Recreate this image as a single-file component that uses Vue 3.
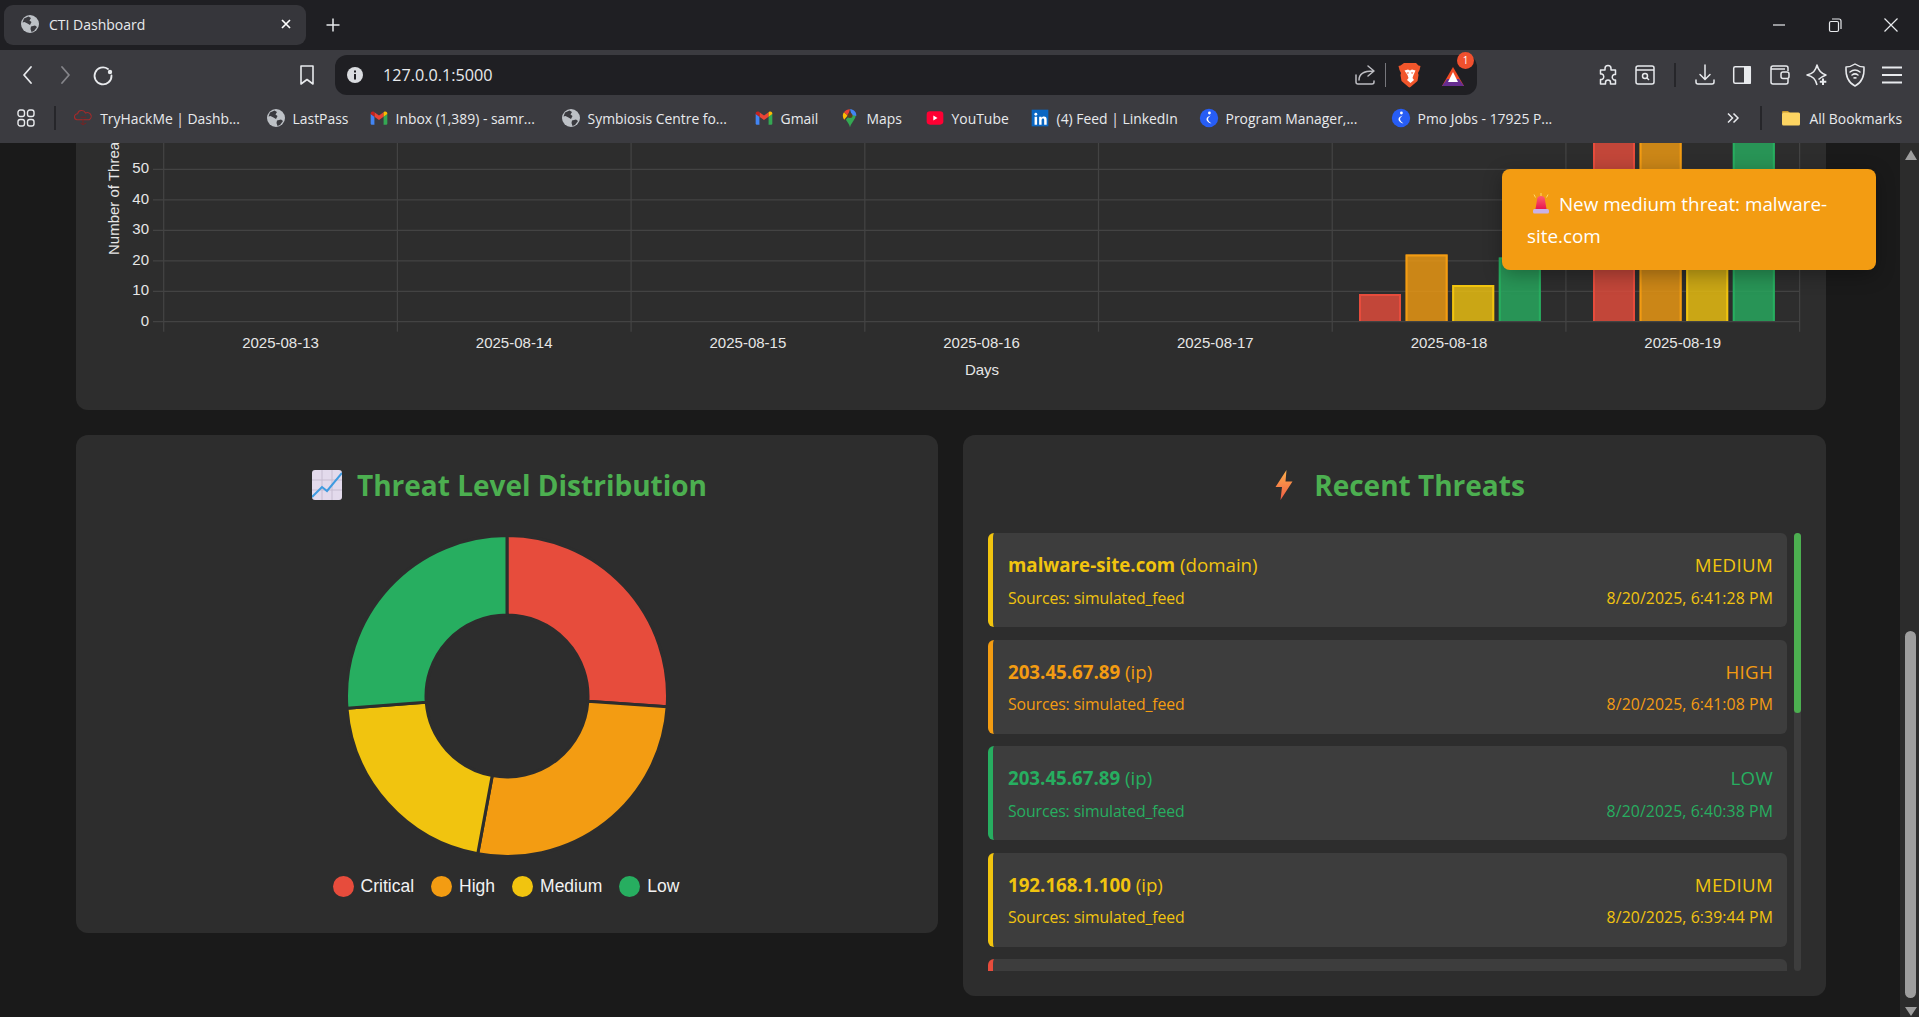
<script setup>
import { computed } from 'vue'

const bookmarks = [
  { icon: 'thm', label: 'TryHackMe | Dashb...', w: 192.4 },
  { icon: 'globe', label: 'LastPass', w: 103 },
  { icon: 'gmail', label: 'Inbox (1,389) - samr...', w: 192 },
  { icon: 'globe', label: 'Symbiosis Centre fo...', w: 193 },
  { icon: 'gmail', label: 'Gmail', w: 86 },
  { icon: 'maps', label: 'Maps', w: 85 },
  { icon: 'youtube', label: 'YouTube', w: 105 },
  { icon: 'linkedin', label: '(4) Feed | LinkedIn', w: 169 },
  { icon: 'naukri', label: 'Program Manager,...', w: 192 },
  { icon: 'naukri', label: 'Pmo Jobs - 17925 P...', w: 168 }
]

const threats = [
  { value: 'malware-site.com', type: 'domain', level: 'medium', time: '8/20/2025, 6:41:28 PM' },
  { value: '203.45.67.89', type: 'ip', level: 'high', time: '8/20/2025, 6:41:08 PM' },
  { value: '203.45.67.89', type: 'ip', level: 'low', time: '8/20/2025, 6:40:38 PM' },
  { value: '192.168.1.100', type: 'ip', level: 'medium', time: '8/20/2025, 6:39:44 PM' }
]

const legend = [
  { label: 'Critical', level: 'critical', color: '#e74c3c', share: 93.8 },
  { label: 'High', level: 'high', color: '#f39c12', share: 96.7 },
  { label: 'Medium', level: 'medium', color: '#f1c40f', share: 75.1 },
  { label: 'Low', level: 'low', color: '#27ae60', share: 94.4 }
]

// bar chart, in page coordinates (the svg viewBox starts at the card's corner)
const gridX = Array.from({ length: 8 }, (_, i) => 163.7 + i * 233.7)
const yTicks = [50, 40, 30, 20, 10, 0].map((v) => ({ v, y: 321.7 - v * 3.045 }))
const days = ['2025-08-13', '2025-08-14', '2025-08-15', '2025-08-16', '2025-08-17', '2025-08-18', '2025-08-19']
const dayLabels = days.map((d, i) => ({ d, x: 280.5 + i * 233.7 }))

const barColors = [
  { fill: 'rgba(231,76,60,.8)', stroke: '#e74c3c' },
  { fill: 'rgba(243,156,18,.8)', stroke: '#f39c12' },
  { fill: 'rgba(241,196,15,.8)', stroke: '#f1c40f' },
  { fill: 'rgba(39,174,96,.8)', stroke: '#27ae60' }
]
const groups = [
  { x: 1359, tops: [294, 254.5, 285, 257.5] },
  { x: 1593, tops: [110, 110, 200, 110] }
]
const bars = groups.flatMap((g) =>
  g.tops.map((top, i) => {
    const x = g.x + i * 46.6
    return {
      x,
      y: top,
      h: 321 - top,
      // border on three sides, the bottom edge sits on the axis
      edge: `M${x + 1} 321V${top + 1}H${x + 41}V321`,
      ...barColors[i]
    }
  })
)

// donut slices
const slices = computed(() => {
  const cx = 160
  const cy = 160
  const R = 160.5
  const r = 81
  const pt = (rad, deg) => {
    const a = ((deg - 90) * Math.PI) / 180
    return `${(cx + rad * Math.cos(a)).toFixed(2)} ${(cy + rad * Math.sin(a)).toFixed(2)}`
  }
  let start = 0
  return legend.map((s) => {
    const end = start + s.share
    const large = s.share > 180 ? 1 : 0
    const d = `M${pt(R, start)}A${R} ${R} 0 ${large} 1 ${pt(R, end)}L${pt(r, end)}A${r} ${r} 0 ${large} 0 ${pt(r, start)}Z`
    start = end
    return { d, color: s.color }
  })
})
</script>

<template>
  <div class="window">
    <!-- shared icons -->
    <svg class="sprite" width="0" height="0">
      <symbol id="globe" viewBox="0 0 20 20">
        <circle cx="10" cy="10" r="9" fill="#bdc1c6" />
        <path d="M4 4.500 8.500 2.500 11 4 9.500 6.500 11.500 8 10 11 7.500 9.500 4.500 8 2.500 8.500zM11 12.500 15 11.500 17 13 14 17 11.500 18 10.500 15z" fill="#3a3a3f" />
      </symbol>
      <symbol id="gmail" viewBox="0 0 24 24">
        <path d="M2 7v12a1 1 0 0 0 1 1h3.500V10.500z" fill="#4285f4" />
        <path d="M17.500 10.500V20H21a1 1 0 0 0 1-1V7z" fill="#34a853" />
        <path d="M6.500 10.500 12 14.500 17.500 10.500V5L12 9 6.500 5z" fill="#ea4335" />
        <path d="M17.500 5v5.500L22 7.200V6.500C22 4.500 19.700 3.400 18.200 4.500z" fill="#fbbc04" />
        <path d="M2 7.200 6.500 10.500V5L5.800 4.500C4.300 3.400 2 4.500 2 6.500z" fill="#c5221f" />
      </symbol>
      <symbol id="maps" viewBox="0 0 24 24">
        <path d="M12 23c-1-4-3-6-5-9l6-7 5.800 2c.2 4-4.800 8-6.800 14z" fill="#34a853" />
        <path d="M5 14c-1-1.500-1.600-3-1.600-5 0-1.500.5-3 1.400-4l4.500 4z" fill="#fbbc04" />
        <path d="M4.800 5C6.300 2.800 9 1.500 12 1.500l-2.500 7.500z" fill="#ea4335" />
        <path d="M12 1.500c4 0 8 3 7.500 8L14 8.500l-2-7z" fill="#4285f4" />
        <circle cx="12" cy="9" r="3" fill="#5a3d1e" />
      </symbol>
      <symbol id="youtube" viewBox="0 0 24 24">
        <rect x="2" y="4" width="20" height="16" rx="4" fill="#ff0033" />
        <path d="M10 9v6l5-3z" fill="#fff" />
      </symbol>
      <symbol id="linkedin" viewBox="0 0 24 24">
        <rect x="2" y="2" width="20" height="20" fill="#0a66c2" />
        <circle cx="7" cy="7.500" r="1.700" fill="#fff" />
        <path d="M5.500 10.500h3V20h-3zM11 10.500h2.800v1.300c.7-1.100 1.800-1.600 3-1.600 2.200 0 3.200 1.400 3.200 3.900V20h-3v-5.500c0-1.100-.4-1.800-1.400-1.800s-1.700.7-1.700 1.900V20H11z" fill="#fff" />
      </symbol>
      <symbol id="naukri" viewBox="0 0 24 24">
        <circle cx="12" cy="12" r="11" fill="#275df5" />
        <circle cx="12.500" cy="6" r="1.700" fill="#fff" />
        <path d="M14 9c-2.500 2-3.500 3.500-3 5 .5 1.500 2 3 4 4.500-3-.5-6-2.500-6-5 0-2 2-3.700 5-4.500z" fill="#fff" />
      </symbol>
      <symbol id="thm" viewBox="0 0 24 24">
        <path d="M5 14a3.500 3.500 0 0 1 .5-7 5 5 0 0 1 9.500-1 4 4 0 0 1 4.500 8z" fill="none" stroke="#a52a2a" stroke-width="1.300" />
        <path d="M9 11h7M12 14v6M9 18l3 2 4-2" fill="none" stroke="#7a2222" stroke-width="1.200" />
      </symbol>
    </svg>

    <!-- tab strip -->
    <div class="tabstrip">
      <div class="tab">
        <svg class="fav"><use href="#globe" /></svg>
        <span class="tab-title">CTI Dashboard</span>
        <svg class="tab-x" width="12" height="12" viewBox="0 0 12 12">
          <path d="M2 2l8 8M10 2l-8 8" stroke="#fff" stroke-width="1.700" />
        </svg>
      </div>
      <svg class="tab-plus" width="16" height="16" viewBox="0 0 16 16">
        <path d="M8 1.500v13M1.500 8h13" stroke="#e8eaed" stroke-width="1.500" />
      </svg>
      <div class="win-controls">
        <svg width="16" height="16" viewBox="0 0 16 16"><path d="M2 8h12" stroke="#e8eaed" stroke-width="1.200" /></svg>
        <svg width="16" height="16" viewBox="0 0 16 16" fill="none" stroke="#e8eaed" stroke-width="1.200">
          <rect x="2.500" y="4.500" width="9" height="10" rx="1.500" />
          <path d="M5 2h7a2 2 0 0 1 2 2v8" />
        </svg>
        <svg width="16" height="16" viewBox="0 0 16 16"><path d="M1.500 1.500l13 13M14.500 1.500l-13 13" stroke="#e8eaed" stroke-width="1.200" /></svg>
      </div>
    </div>

    <!-- toolbar -->
    <div class="toolbar">
      <div class="btn">
        <svg width="22" height="22" viewBox="0 0 22 22" fill="none" stroke="#e8eaed" stroke-width="1.800" stroke-linecap="round" stroke-linejoin="round"><path d="M14 3 7 11l7 8" /></svg>
      </div>
      <div class="btn">
        <svg width="22" height="22" viewBox="0 0 22 22" fill="none" stroke="#85858a" stroke-width="1.800" stroke-linecap="round" stroke-linejoin="round"><path d="M8 3l7 8-7 8" /></svg>
      </div>
      <div class="btn">
        <svg width="22" height="22" viewBox="0 0 22 22" fill="none" stroke="#e8eaed" stroke-width="1.800" stroke-linecap="round"><path d="M16 5A8.500 8.500 0 1 0 19.500 11.500" /><circle cx="18" cy="8" r="2.200" fill="#e8eaed" stroke="none" /></svg>
      </div>
      <div class="btn bookmark-btn">
        <svg width="20" height="24" viewBox="0 0 20 24" fill="none" stroke="#e8eaed" stroke-width="1.600" stroke-linejoin="round"><path d="M4 3h12v18l-6-4.500L4 21z" /></svg>
      </div>
      <div class="pill">
        <svg width="20" height="20" viewBox="0 0 20 20">
          <circle cx="10" cy="10" r="8" fill="#dadce0" />
          <rect x="9" y="9" width="2" height="5.500" fill="#1f1f23" />
          <rect x="9" y="5.500" width="2" height="2" fill="#1f1f23" />
        </svg>
        <span class="url">127.0.0.1:5000</span>
        <div class="pill-right">
          <svg width="24" height="24" viewBox="0 0 24 24" fill="none" stroke="#bdbdc2" stroke-width="1.500" stroke-linecap="round" stroke-linejoin="round">
            <path d="M3 12v7a2 2 0 0 0 2 2h14a2 2 0 0 0 2-2v-1" />
            <path d="M6 17c0-6 4-9 14-9M15 3l6 5-6 5" />
          </svg>
          <span class="pill-sep"></span>
          <svg class="lion" width="24" height="28" viewBox="0 0 24 28">
            <path d="M6 2h12l2.500 2.500 2 .5-1 4-1.500 3 .5 2-1 6-7 6-1 .5-1-.5-7-6-1-6 .5-2-1.500-3-1-4 2-.5z" fill="#f1562b" />
            <path d="M6.500 9.500 10 8.500l2 1 2-1 3.500 1-2 4.500-1 3 1.500 2-3.500 3-3.500-3 1.500-2-1-3z" fill="#fff" />
            <path d="M8.500 11.500h2.500l-1 1.500zM15.500 11.500H13l1 1.500z" fill="#f1562b" />
          </svg>
          <span class="bat">
            <svg width="26" height="26" viewBox="0 0 26 26">
              <path d="M2 24 13 5 24 24z" fill="#ef4a25" />
              <path d="M2 24 7 17h12l5 7z" fill="#662d91" />
              <path d="M8 20 13 10l5 10z" fill="#fff" />
            </svg>
            <span class="badge">1</span>
          </span>
        </div>
      </div>
      <div class="ext">
        <div class="btn">
          <svg width="24" height="24" viewBox="0 0 24 24" fill="none" stroke="#e8eaed" stroke-width="1.500" stroke-linejoin="round">
            <path d="M9 5.500a3 3 0 0 1 6 0V7h4.500v4.500H18a3 3 0 0 0 0 5.500h1.500V21H14.500v-1.500a2.500 2.500 0 0 0-5 0V21H4.500v-4.500H6a3 3 0 0 0 0-5.500H4.500V7H9z" />
          </svg>
        </div>
        <div class="btn">
          <svg width="24" height="24" viewBox="0 0 24 24" fill="none" stroke="#e8eaed" stroke-width="1.500">
            <rect x="3" y="3" width="18" height="18" rx="2" />
            <path d="M3 7h18" />
            <circle cx="12" cy="13" r="2.500" />
            <path d="M14 15l2 2" />
          </svg>
        </div>
        <span class="ext-sep"></span>
        <div class="btn">
          <svg width="24" height="24" viewBox="0 0 24 24" fill="none" stroke="#e8eaed" stroke-width="1.500" stroke-linecap="round" stroke-linejoin="round">
            <path d="M12 2v14M7 11.500l5 5 5-5M3 17v2a2 2 0 0 0 2 2h14a2 2 0 0 0 2-2v-2" />
          </svg>
        </div>
        <div class="btn">
          <svg width="24" height="24" viewBox="0 0 24 24">
            <rect x="3.700" y="3.700" width="16.600" height="16.600" rx="1.500" fill="none" stroke="#e8eaed" stroke-width="1.500" />
            <rect x="14" y="3" width="7" height="18" rx="1" fill="#e8eaed" />
          </svg>
        </div>
        <div class="btn">
          <svg width="24" height="24" viewBox="0 0 24 24" fill="none" stroke="#e8eaed" stroke-width="1.500" stroke-linejoin="round">
            <path d="M20 8V5a2 2 0 0 0-2-2H5a2 2 0 0 0-2 2v14a2 2 0 0 0 2 2h13a2 2 0 0 0 2-2v-3" />
            <path d="M3 6h14" />
            <rect x="13" y="9" width="8" height="6.500" rx="2" />
          </svg>
        </div>
        <div class="btn">
          <svg width="24" height="24" viewBox="0 0 24 24" fill="none" stroke="#e8eaed" stroke-width="1.500" stroke-linejoin="round">
            <path d="M13.500 16.500C15 15 16 14 21 12c-5-1.500-7.500-4-9-10-1.500 6-4 8.500-10 10 6 1.500 8.500 4 10 10" />
            <path d="M18 15.500v6.500M14.800 18.800h6.500" stroke-width="2" />
          </svg>
        </div>
        <div class="btn">
          <svg width="24" height="26" viewBox="0 0 24 26" fill="none" stroke="#e8eaed" stroke-width="1.500" stroke-linecap="round" stroke-linejoin="round">
            <path d="M12 2c3 2 6 3 9 3 .5 8-1 15-9 19C4 20 2.500 13 3 5c3 0 6-1 9-3z" />
            <path d="M7 10c3-2.500 7-2.500 10 0M9 13c2-1.500 4-1.500 6 0M11 16c.7-.4 1.300-.4 2 0" />
          </svg>
        </div>
        <div class="btn">
          <svg width="24" height="24" viewBox="0 0 24 24" stroke="#e8eaed" stroke-width="1.800"><path d="M2 4.500h20M2 12h20M2 19.500h20" /></svg>
        </div>
      </div>
    </div>

    <!-- bookmarks bar -->
    <div class="bookmarks">
      <svg class="apps" width="18" height="18" viewBox="0 0 18 18" fill="none" stroke="#e8eaed" stroke-width="1.400">
        <rect x="1" y="1" width="6.500" height="6.500" rx="2.200" />
        <rect x="10.500" y="1" width="6.500" height="6.500" rx="2.200" />
        <rect x="1" y="10.500" width="6.500" height="6.500" rx="2.200" />
        <rect x="10.500" y="10.500" width="6.500" height="6.500" rx="2.200" />
      </svg>
      <span class="bm-sep first"></span>
      <div
        v-for="b in bookmarks"
        :key="b.label"
        class="bm"
        :style="{ width: b.w + 'px' }"
      >
        <svg class="bm-icon"><use :href="'#' + b.icon" /></svg>
        <span>{{ b.label }}</span>
      </div>
      <div class="bm-end">
        <svg width="14" height="14" viewBox="0 0 14 14" fill="none" stroke="#e8eaed" stroke-width="1.500"><path d="M2 2.500 6.500 7 2 11.500M7.500 2.500 12 7l-4.500 4.500" /></svg>
        <span class="bm-sep"></span>
        <svg class="folder" width="20" height="20" viewBox="0 0 20 20">
          <path d="M1 4a1 1 0 0 1 1-1h5l2 2h-8z" fill="#c99a2e" />
          <rect x="1" y="4.500" width="18" height="13" rx="1.500" fill="#fcd462" />
        </svg>
        <span class="all">All Bookmarks</span>
      </div>
    </div>

    <!-- page -->
    <div class="viewport">
      <main class="page">
        <section class="card chart-card">
          <svg class="bar-chart" width="1750" height="267" viewBox="76 143 1750 267">
            <g stroke="#434343" stroke-width="1.250">
              <line v-for="x in gridX" :key="x" :x1="x" :x2="x" y1="142" y2="331.700" />
              <line v-for="t in yTicks" :key="t.v" x1="153" x2="1800" :y1="t.y" :y2="t.y" />
            </g>
            <g v-for="(b, i) in bars" :key="i">
              <rect :x="b.x" :y="b.y" width="42" :height="b.h" :fill="b.fill" />
              <path :d="b.edge" fill="none" :stroke="b.stroke" stroke-width="2" />
            </g>
            <text v-for="t in yTicks" :key="'l' + t.v" class="tick" x="149" :y="t.y + 4" text-anchor="end">{{ t.v }}</text>
            <text v-for="l in dayLabels" :key="l.d" class="tick" :x="l.x" y="348" text-anchor="middle">{{ l.d }}</text>
            <text class="tick" x="982" y="375" text-anchor="middle">Days</text>
            <text class="tick" transform="translate(119 255) rotate(-90)">Number of Threats</text>
          </svg>
        </section>

        <div class="columns">
          <section class="card">
            <h2 class="card-title">
              <svg class="emoji" width="30" height="30" viewBox="0 0 30 30">
                <rect width="30" height="30" rx="3" fill="#e3daec" />
                <path d="M0 10h30M0 20h30M10 0v30M20 0v30" stroke="#c6bcd0" stroke-width="1" />
                <path d="M0 27 10 17l5 4L30 3" fill="none" stroke="#3f9be0" stroke-width="2" />
              </svg>
              <span>Threat Level Distribution</span>
            </h2>
            <div class="donut">
              <svg width="320" height="320" viewBox="0 0 320 320">
                <path
                  v-for="s in slices"
                  :key="s.color"
                  :d="s.d"
                  :fill="s.color"
                  stroke="#2d2d2d"
                  stroke-width="3"
                />
              </svg>
            </div>
            <div class="legend">
              <div v-for="l in legend" :key="l.label" class="legend-item">
                <span class="dot" :class="l.level"></span>
                <span>{{ l.label }}</span>
              </div>
            </div>
          </section>

          <section class="card">
            <h2 class="card-title">
              <svg class="emoji" width="30" height="30" viewBox="0 0 30 30">
                <defs>
                  <linearGradient id="bolt" x1="0" y1="0" x2="0" y2="1">
                    <stop offset="0" stop-color="#fdb04a" />
                    <stop offset="1" stop-color="#ef5b45" />
                  </linearGradient>
                </defs>
                <path d="M17.500 0 6.500 17h6.500l-1.500 13 12-18.500h-7z" fill="url(#bolt)" />
              </svg>
              <span>Recent Threats</span>
            </h2>
            <div class="threat-wrap">
              <div class="threat-list">
                <article v-for="t in threats" :key="t.time" class="threat" :class="t.level">
                  <div class="row main-row">
                    <span><strong>{{ t.value }}</strong> ({{ t.type }})</span>
                    <span class="level">{{ t.level.toUpperCase() }}</span>
                  </div>
                  <div class="row sub-row">
                    <span class="sources">Sources: simulated_feed</span>
                    <span class="time">{{ t.time }}</span>
                  </div>
                </article>
                <article class="threat critical"></article>
              </div>
              <div class="list-track"><div class="list-thumb"></div></div>
            </div>
          </section>
        </div>
      </main>
      <div class="page-scroll">
        <span class="arrow up"></span>
        <span class="page-thumb"></span>
        <span class="arrow down"></span>
      </div>
    </div>

    <!-- toast -->
    <div class="toast">
      <svg class="siren" width="20" height="21" viewBox="0 0 20 21">
        <defs>
          <linearGradient id="dome" x1="0" y1="0" x2="0" y2="1">
            <stop offset="0" stop-color="#ff5f6d" />
            <stop offset="1" stop-color="#e8174f" />
          </linearGradient>
        </defs>
        <path d="M10 0v3M3 1.500l1.500 3M17 1.500l-1.500 3" stroke="#ffd76a" stroke-width="1" />
        <path d="M4.500 16 6 7a4 4 0 0 1 8 0l1.500 9z" fill="url(#dome)" />
        <rect x="2" y="16" width="16" height="4.500" rx="1.500" fill="#c9b2e8" />
      </svg>
      New medium threat: malware-site.com
    </div>
  </div>
</template>

<style scoped>
.window {
  position: relative;
  height: 100vh;
  display: flex;
  flex-direction: column;
  overflow: hidden;
  background: #1a1a1a;
  font-family: "Open Sans", "Noto Sans", sans-serif;
}
.sprite { position: absolute; }

/* browser chrome */
.tabstrip {
  height: 50px;
  flex: none;
  display: flex;
  align-items: center;
  background: #1f1f23;
  padding-left: 4px;
}
.tab {
  width: 302px;
  height: 40px;
  display: flex;
  align-items: center;
  background: #36363b;
  border-radius: 9px;
  padding: 0 14px 2px 16px;
  box-sizing: border-box;
  color: #e8eaed;
  font-size: 14px;
}
.fav { width: 20px; height: 20px; flex: none; }
.tab-title { margin-left: 9px; }
.tab-x { margin-left: auto; }
.tab-plus { margin-left: 19px; }
.win-controls {
  margin-left: auto;
  display: flex;
  gap: 40px;
  padding-right: 20px;
}
.toolbar {
  height: 50px;
  flex: none;
  display: flex;
  align-items: center;
  background: #3b3b40;
  padding: 0 8px 0 9px;
}
.btn {
  width: 37.5px;
  flex: none;
  display: flex;
  align-items: center;
  justify-content: center;
}
.bookmark-btn { margin-left: 166.5px; }
.pill {
  width: 1142px;
  height: 40px;
  margin-left: 9.5px;
  flex: none;
  display: flex;
  align-items: center;
  background: #1f1f23;
  border-radius: 12px;
  padding: 0 11px 0 9.5px;
  box-sizing: border-box;
}
.url {
  margin-left: 18.5px;
  color: #e8eaed;
  font-size: 16.2px;
}
.pill-right {
  margin-left: auto;
  display: flex;
  align-items: center;
}
.pill-sep {
  width: 1px;
  height: 24px;
  background: #77777c;
  margin: 0 12px 0 8.5px;
}
.bat { position: relative; display: flex; margin-left: 18px; }
.badge {
  position: absolute;
  top: -10px;
  right: -8px;
  width: 17px;
  height: 17px;
  border-radius: 50%;
  background: #f0502e;
  color: #fff;
  font-size: 10px;
  line-height: 17px;
  text-align: center;
}
.ext {
  margin-left: auto;
  display: flex;
  align-items: center;
}
.ext-sep {
  width: 2px;
  height: 24px;
  background: #26262a;
  margin: 0 10.5px 0 9.5px;
}
.bookmarks {
  height: 43px;
  flex: none;
  display: flex;
  align-items: center;
  background: #3b3b40;
  color: #e8eaed;
  font-size: 13.9px;
  padding: 0 17px 7px;
  box-sizing: border-box;
}
.apps { flex: none; }
.bm-sep {
  width: 2px;
  height: 24px;
  background: #26262a;
  flex: none;
}
.bm-sep.first { margin: 0 18.6px 0 18.6px; }
.bm {
  display: flex;
  align-items: center;
  flex: none;
  white-space: nowrap;
}
.bm-icon {
  width: 20px;
  height: 20px;
  margin: 0 7px 0 -1px;
  flex: none;
}
.bm-end {
  margin-left: auto;
  display: flex;
  align-items: center;
}
.bm-end .bm-sep { margin: 0 19px 0 20px; }
.folder { margin-right: 8px; }
.all { white-space: nowrap; }

/* page */
.viewport {
  flex: 1;
  min-height: 0;
  display: flex;
}
.page {
  flex: 1;
  min-width: 0;
  padding: 0 74px 0 76px;
  color: #e0e0e0;
}
.card {
  background: #2d2d2d;
  border-radius: 12px;
  padding: 25px;
}
.chart-card {
  height: 267px;
  padding: 0;
  border-radius: 0 0 12px 12px;
  overflow: hidden;
  margin-bottom: 25px;
}
.bar-chart { display: block; }
.tick {
  font-family: "Liberation Sans", Arial, sans-serif;
  font-size: 15px;
  fill: #e6e6e6;
}
.columns {
  display: grid;
  grid-template-columns: 862px 863px;
  gap: 25px;
  align-items: start;
}
.card-title {
  margin: 0 0 23px;
  padding-left: 5px;
  height: 50px;
  display: flex;
  align-items: center;
  justify-content: center;
  gap: 15px;
  color: #4caf50;
  font-size: 28px;
  font-weight: 700;
}
.emoji { flex: none; }
.donut {
  display: flex;
  justify-content: center;
  padding-top: 3px;
}
.donut svg { display: block; }
.legend {
  display: flex;
  justify-content: center;
  gap: 17px;
  margin: 20px 0 11px;
  padding-right: 2px;
  font-family: "Liberation Sans", Arial, sans-serif;
  font-size: 17.5px;
  line-height: 21px;
  color: #f2f2f2;
}
.legend-item {
  display: flex;
  align-items: center;
  gap: 7px;
}
.dot {
  width: 21px;
  height: 21px;
  border-radius: 50%;
}
.dot.critical { background: #e74c3c; }
.dot.high { background: #f39c12; }
.dot.medium { background: #f1c40f; }
.dot.low { background: #27ae60; }

.threat-wrap {
  height: 438px;
  display: flex;
  gap: 7px;
}
.threat-list {
  flex: 1;
  min-width: 0;
  display: flex;
  flex-direction: column;
  gap: 12.5px;
  overflow: hidden;
}
.threat {
  height: 94px;
  flex: none;
  box-sizing: border-box;
  background: #3d3d3d;
  border-left: 5px solid;
  border-radius: 6px;
  padding: 14px 14px 0 15px;
}
.threat.medium { color: #f1c40f; border-color: #f1c40f; }
.threat.high { color: #f39c12; border-color: #f39c12; }
.threat.low { color: #27ae60; border-color: #27ae60; }
.threat.critical { color: #e74c3c; border-color: #e74c3c; }
.row {
  display: flex;
  justify-content: space-between;
}
.main-row {
  font-size: 18.7px;
  line-height: 35px;
}
.level { letter-spacing: 0.3px; }
.sub-row {
  margin-top: 1.5px;
  font-size: 15.8px;
  line-height: 29px;
}
.sources { letter-spacing: -0.1px; }
.time { letter-spacing: 0.1px; }
.list-track {
  width: 7px;
  flex: none;
  background: #3d3d3d;
  border-radius: 4px;
}
.list-thumb {
  height: 180px;
  background: #4caf50;
  border-radius: 4px;
}
.page-scroll {
  width: 19px;
  flex: none;
  display: flex;
  flex-direction: column;
  align-items: center;
  background: #2c2c2c;
  padding-top: 7px;
  box-sizing: border-box;
}
.arrow {
  width: 0;
  height: 0;
  border-left: 6px solid transparent;
  border-right: 6px solid transparent;
  margin-left: 3px;
}
.arrow.up { border-bottom: 10px solid #9e9e9e; }
.arrow.down { border-top: 9px solid #9e9e9e; margin-top: 9px; }
.page-thumb {
  width: 11px;
  height: 367px;
  margin: 471px 0 0 2px;
  background: #9e9e9e;
  border-radius: 6px;
}

/* toast */
.toast {
  position: absolute;
  top: 169px;
  right: 43px;
  width: 374px;
  box-sizing: border-box;
  padding: 19px 25px 18px;
  background: #f39c12;
  border-radius: 8px;
  color: #fff;
  font-size: 18.85px;
  line-height: 32px;
  box-shadow: 0 5px 19px rgba(0, 0, 0, 0.3);
}
.siren {
  vertical-align: -3px;
  margin: 0 3px 0 4px;
}
</style>
